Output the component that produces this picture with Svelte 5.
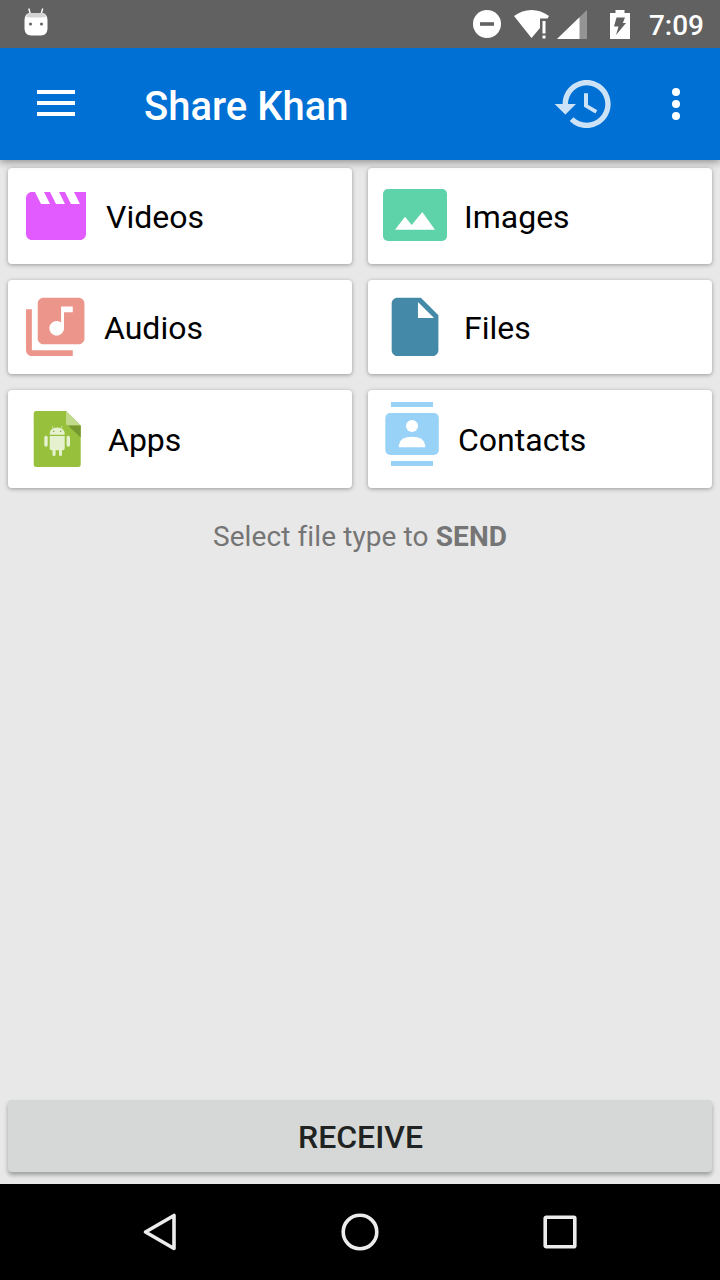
<script lang="ts">
    interface FileType {
        id: string;
        label: string;
        // space between the icon slot and the label
        indent: number;
    }

    const FILE_TYPES: FileType[] = [
        { id: 'videos', label: 'Videos', indent: 14 },
        { id: 'images', label: 'Images', indent: 12 },
        { id: 'audios', label: 'Audios', indent: 12 },
        { id: 'files', label: 'Files', indent: 12 },
        { id: 'apps', label: 'Apps', indent: 16 },
        { id: 'contacts', label: 'Contacts', indent: 6 },
    ];
</script>

<div class="screen">
    <div class="status">
        <svg class="status__bot" width="26" height="30" viewBox="0 0 26 30">
            <path d="M5.800 1.500l1.700 6M19.700 1.500l-1.700 6" stroke="#fff" stroke-width="1.400" />
            <path
                d="M1.500 13Q2 6 7 6H19Q24 6 24.500 13V22Q24 28 18 28.500H8Q2 28 1.500 22Z"
                fill="#fff"
            />
            <path d="M3 10Q4 6 7 6H19Q22 6 23 10Q13 11 3 10Z" fill="#d4d4d4" />
            <circle cx="7.500" cy="17" r="1.500" fill="#616161" />
            <circle cx="18.500" cy="17" r="1.500" fill="#616161" />
        </svg>
        <div class="status__right">
            <svg width="28" height="28" viewBox="0 0 28 28">
                <circle cx="14" cy="14" r="14" fill="#fff" />
                <path d="M7 12.200h14v3.600H7z" fill="#616161" />
            </svg>
            <svg class="status__wifi" width="35" height="29" viewBox="0 0 35 29">
                <path
                    d="M0 6Q8 0 17.500 0T35 6L33.500 8.500H26V18L17.500 28Z"
                    fill="#fff"
                />
                <path d="M28.500 11h3v12.500h-3zM28.500 25.500h3v3h-3z" fill="#fff" />
            </svg>
            <svg class="status__signal" width="30" height="29" viewBox="0 0 30 29">
                <path d="M30 0V29H0Z" fill="#949494" />
                <path d="M22.500 7.250V29H0Z" fill="#fff" />
            </svg>
            <svg class="status__battery" width="20" height="29" viewBox="0 0 20 29">
                <path d="M5.500 0h9v3H20V29H0V3h5.500z" fill="#fff" />
                <path d="M6.500 7.500H15L12.800 13H16L6 25 8.500 16.500H4z" fill="#616161" />
            </svg>
            <span class="status__time">7:09</span>
        </div>
    </div>

    <header class="bar">
        <button type="button" class="bar__menu" aria-label="Menu">
            <svg width="38" height="26" viewBox="0 0 38 26">
                <path d="M0 0h38v4H0zM0 11h38v4H0zM0 22h38v4H0z" fill="#fff" />
            </svg>
        </button>
        <h1>Share Khan</h1>
        <button type="button" class="bar__history" aria-label="History">
            <svg width="64" height="64" viewBox="0 0 24 24">
                <path
                    fill="#cce3f7"
                    d="M13 3c-4.970 0-9 4.030-9 9H1l3.890 3.890.07.14L9 12H6c0-3.870 3.130-7 7-7s7 3.130 7 7-3.130 7-7 7c-1.930 0-3.680-.79-4.940-2.060l-1.420 1.420C8.270 19.990 10.510 21 13 21c4.970 0 9-4.030 9-9s-4.030-9-9-9zm-1 5v5l4.280 2.540.72-1.210-3.500-2.080V8z"
                />
            </svg>
        </button>
        <button type="button" class="bar__more" aria-label="More options">
            <svg width="8" height="32" viewBox="0 0 8 32">
                <circle cx="4" cy="4" r="4" fill="#fff" />
                <circle cx="4" cy="16" r="4" fill="#fff" />
                <circle cx="4" cy="28" r="4" fill="#fff" />
            </svg>
        </button>
    </header>

    <main class="content">
        <div class="grid">
            {#each FILE_TYPES as t (t.id)}
                <button type="button" class="card">
                    <svg class="card__icon" width="72" height="72" viewBox="0 0 72 72">
                        {#if t.id === 'videos'}
                            <path
                                transform="scale(3)"
                                fill="#e15bff"
                                d="M18 4l2 4h-3l-2-4h-2l2 4h-3l-2-4H8l2 4H7L5 4H4c-1.100 0-2 .9-2 2v12c0 1.100.9 2 2 2h16c1.100 0 2-.9 2-2V4z"
                            />
                        {:else if t.id === 'images'}
                            <rect x="3" y="9" width="64" height="52" rx="5" fill="#5ed2a9" />
                            <path d="M15 49.700L25 36.700 31.700 45 42.300 32 55 49.700z" fill="#fff" />
                        {:else if t.id === 'audios'}
                            <path
                                transform="translate(.2 .8) scale(2.920)"
                                fill="#ec958a"
                                d="M20 2H8c-1.100 0-2 .9-2 2v12c0 1.100.9 2 2 2h12c1.100 0 2-.9 2-2V4c0-1.100-.9-2-2-2zm-2 5h-3v5.500c0 1.380-1.120 2.500-2.500 2.500S10 13.880 10 12.500s1.120-2.500 2.500-2.500c.57 0 1.080.19 1.500.51V5h4zM4 6H2v14c0 1.100.9 2 2 2h14v-2H4z"
                            />
                        {:else if t.id === 'files'}
                            <path
                                transform="translate(0 .8) scale(2.920)"
                                fill="#448aa8"
                                d="M6 2c-1.100 0-2 .9-2 2v16c0 1.100.9 2 2 2h12c1.100 0 2-.9 2-2V8l-6-6zm7 7V3.500L18.500 9z"
                            />
                        {:else if t.id === 'apps'}
                            <path
                                d="M16 8H46L60.700 22.500V61.500Q60.700 64 58 64H16.500Q13.700 64 13.700 61.500V10.500Q13.700 8 16 8Z"
                                fill="#97c13d"
                            />
                            <path d="M46 8L60.700 22.500H48.500Q46 22.500 46 20Z" fill="#c1da8b" />
                            <path d="M48 22.500H60.700V34.500Z" fill="#76982f" />
                            <g fill="#e6f1d0">
                                <path d="M29.700 31.800Q29.700 24.500 37.200 24.500T44.700 31.800Z" />
                                <path
                                    d="M29.700 33H44.700V45.500Q44.700 47.300 43 47.300H42V51.500Q42 53 40.500 53T39 51.500V47.300H35.600V51.500Q35.600 53 34 53T32.500 51.500V47.300H31.400Q29.700 47.300 29.700 45.500Z"
                                />
                                <rect x="24.300" y="32.700" width="3.400" height="11" rx="1.700" />
                                <rect x="46.600" y="32.700" width="3.400" height="11" rx="1.700" />
                            </g>
                            <path
                                d="M32 23l1.500 2.500M42.400 23l-1.500 2.500"
                                stroke="#e6f1d0"
                                stroke-width=".7"
                            />
                            <circle cx="33.700" cy="28.300" r=".8" fill="#86aa3d" />
                            <circle cx="40.700" cy="28.300" r=".8" fill="#86aa3d" />
                        {:else if t.id === 'contacts'}
                            <g fill="#98d2f6">
                                <path d="M11-1h42v5H11zM11 58h42v5H11z" />
                                <rect x="5.300" y="10" width="53.500" height="42" rx="5" />
                            </g>
                            <circle cx="32" cy="23" r="6" fill="#fff" />
                            <path
                                d="M18.800 44.300V42Q20 33.700 32 33.700T45.200 42V44.300Z"
                                fill="#fff"
                            />
                        {/if}
                    </svg>
                    <span style="margin-left: {t.indent}px">{t.label}</span>
                </button>
            {/each}
        </div>

        <p class="hint">Select file type to <b>SEND</b></p>

        <button type="button" class="receive">RECEIVE</button>
    </main>

    <nav class="nav">
        <svg width="40" height="40" viewBox="0 0 40 40">
            <path d="M34 3.500V36.500L5.500 20Z" />
        </svg>
        <svg width="40" height="40" viewBox="0 0 40 40">
            <circle cx="20" cy="20" r="16.800" />
        </svg>
        <svg width="40" height="40" viewBox="0 0 40 40">
            <rect x="5.200" y="5.200" width="29.600" height="29.600" rx="1" />
        </svg>
    </nav>
</div>

<style>
    :global(body) {
        margin: 0;
    }
    .screen {
        display: flex;
        flex-direction: column;
        width: 720px;
        height: 1280px;
        overflow: hidden;
        background: #e8e8e8;
        font-family: Roboto, 'Liberation Sans', sans-serif;
    }
    svg {
        display: block;
        flex: none;
    }
    button {
        margin: 0;
        padding: 0;
        border: none;
        background: none;
        font-family: inherit;
    }
    .status {
        display: flex;
        justify-content: space-between;
        position: relative;
        z-index: 2;
        height: 48px;
        flex: none;
        padding: 0 16px 0 23px;
        background: #616161;
    }
    .status__bot {
        margin-top: 7px;
    }
    .status__right {
        display: flex;
        align-items: center;
    }
    .status__wifi {
        margin-left: 13px;
    }
    .status__signal {
        margin-left: 8px;
    }
    .status__battery {
        margin-left: 23px;
    }
    .status__time {
        margin: 4px 0 0 19px;
        font-size: 28px;
        font-weight: 500;
        line-height: 32px;
        color: #fff;
    }
    .bar {
        display: flex;
        align-items: center;
        position: relative;
        z-index: 1;
        height: 112px;
        flex: none;
        padding: 0 40px 0 37px;
        background: #0070d4;
        box-shadow: 0 2px 8px rgba(0, 0, 0, 0.4);
    }
    .bar__menu {
        margin-top: -2px;
    }
    h1 {
        margin: 6px 0 0 69px;
        font-size: 40px;
        font-weight: 500;
        line-height: 48px;
        color: #fff;
    }
    .bar__history {
        margin-left: auto;
    }
    .bar__more {
        margin-left: 56px;
    }
    .content {
        display: flex;
        flex-direction: column;
        flex: 1;
        padding: 8px 8px 12px;
    }
    .grid {
        display: grid;
        grid-template-columns: 1fr 1fr;
        grid-template-rows: 96px 94px 98px;
        gap: 16px;
    }
    .card {
        display: flex;
        align-items: center;
        padding: 0 12px;
        border-radius: 4px;
        background: #fff;
        box-shadow: 0 1px 4px rgba(0, 0, 0, 0.34);
        font-size: 32px;
        line-height: 38px;
        color: #000;
    }
    .card span {
        padding-top: 2px;
    }
    .card__icon {
        overflow: visible;
    }
    .hint {
        margin: 33px 0 0;
        font-size: 28px;
        line-height: 32px;
        letter-spacing: 0.1px;
        text-align: center;
        color: #757575;
    }
    .receive {
        height: 72px;
        margin-top: auto;
        padding: 2px 0 0 1px;
        border-radius: 4px;
        background: #d6d8d7;
        box-shadow: 0 3px 4px rgba(0, 0, 0, 0.32);
        font-size: 32px;
        font-weight: 500;
        color: #212322;
    }
    .nav {
        display: flex;
        justify-content: center;
        align-items: center;
        gap: 160px;
        height: 96px;
        flex: none;
        background: #000;
    }
    .nav svg {
        fill: none;
        stroke: #ececec;
        stroke-width: 3.6;
        stroke-linejoin: round;
    }
</style>
